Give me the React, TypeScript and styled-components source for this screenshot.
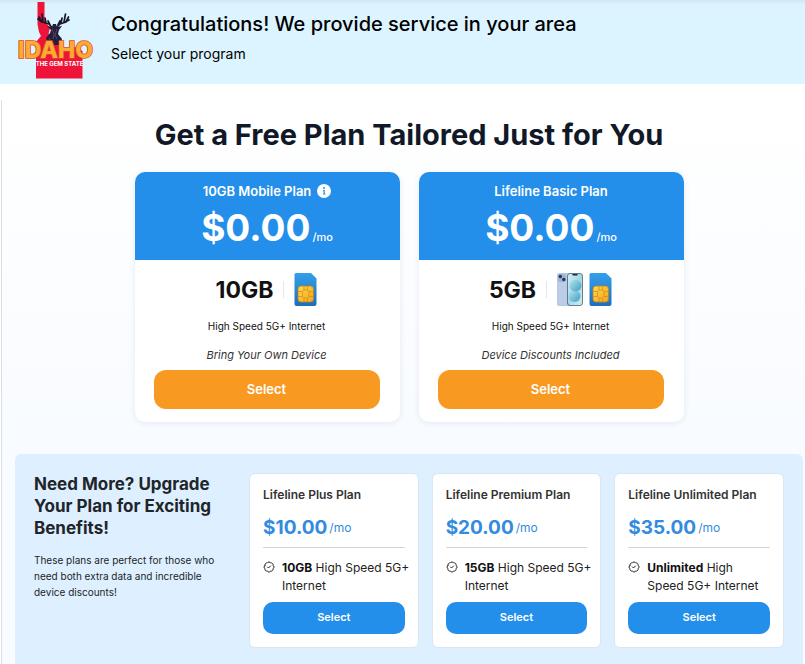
import React from "react";
import styled, { createGlobalStyle } from "styled-components";
import { BadgeCheck } from "lucide-react";

const GlobalStyle = createGlobalStyle`
  *, *::before, *::after { box-sizing: border-box; }
  body {
    margin: 0;
    background: #ffffff;
    color: #111111;
    font-family: Inter, "Open Sans", sans-serif;
  }
  h1, h2, h3, p, ul { margin: 0; padding: 0; }
  button { font-family: inherit; cursor: pointer; border: 0; }
`;

const Page = styled.div`
  min-height: 100vh;
  display: flex;
  flex-direction: column;
`;

const Banner = styled.header`
  display: flex;
  gap: 16px;
  height: 84px;
  padding: 0 16px;
  background: linear-gradient(#cfe5f0 0, #dcf4ff 4px);
`;

const BannerText = styled.div`
  padding-top: 10px;
`;

const BannerTitle = styled.h1`
  font-size: 20px;
  line-height: 28px;
  font-weight: 500;
  color: #000000;
`;

const BannerSubtitle = styled.p`
  margin-top: 6px;
  font-size: 14px;
  line-height: 20px;
  color: #000000;
`;

const Main = styled.main`
  flex: 1;
  display: flex;
  flex-direction: column;
  margin: 16px 0 0 1px;
  padding: 17px 2px 0 13px;
  border-left: 1px solid #dcdfe4;
  background: linear-gradient(#ffffff, #f8fbff 340px);
`;

const MainTitle = styled.h2`
  font-size: 29px;
  line-height: 36px;
  font-weight: 700;
  text-align: center;
  color: #111827;
`;

const FreePlans = styled.section`
  display: grid;
  grid-template-columns: repeat(2, 265px);
  justify-content: center;
  gap: 19px;
  margin-top: 19px;
`;

const PlanCard = styled.article`
  overflow: hidden;
  border-radius: 10px;
  background: #ffffff;
  box-shadow: 0 1px 6px rgba(30, 80, 140, 0.1);
  text-align: center;
`;

const PlanHead = styled.div`
  height: 88px;
  padding-top: 9px;
  background: #248fea;
  color: #ffffff;
`;

const PlanName = styled.h3`
  display: flex;
  align-items: center;
  justify-content: center;
  gap: 6px;
  font-size: 13px;
  line-height: 20px;
  font-weight: 600;
`;

const Price = styled.p`
  display: flex;
  align-items: baseline;
  justify-content: center;
  gap: 2px;
  font-size: 37px;
  line-height: 54px;
  font-weight: 700;
`;

const PriceUnit = styled.span`
  font-size: 11px;
  font-weight: 500;
`;

const PlanBody = styled.div`
  padding: 13px 20px 13px 19px;
`;

const DataRow = styled.div`
  display: flex;
  align-items: center;
  justify-content: center;
  height: 33px;
`;

const DataAmount = styled.strong`
  font-size: 23px;
  line-height: 32px;
  font-weight: 700;
`;

const Divider = styled.span`
  width: 1px;
  height: 17px;
  margin: 0 10px;
  background: #e5e7eb;
`;

const DeviceIcons = styled.span`
  display: flex;
  gap: 6px;
`;

const Speed = styled.p`
  margin-top: 12px;
  font-size: 10px;
  line-height: 16px;
`;

const DeviceNote = styled.p`
  margin-top: 13px;
  font-size: 11px;
  line-height: 16px;
  font-style: italic;
  color: #333333;
`;

const SelectButton = styled.button<{ $tone: "orange" | "blue" }>`
  display: block;
  width: 100%;
  height: ${(p) => (p.$tone === "orange" ? "39px" : "32px")};
  margin-top: 7px;
  padding: 0 0 2px;
  border-radius: ${(p) => (p.$tone === "orange" ? "12px" : "10px")};
  background: ${(p) => (p.$tone === "orange" ? "#f89922" : "#248fea")};
  color: #ffffff;
  font-size: ${(p) => (p.$tone === "orange" ? "13px" : "11px")};
  font-weight: 600;
`;

const Upgrade = styled.section`
  flex: 1;
  display: grid;
  grid-template-columns: 202px repeat(3, minmax(0, 1fr));
  align-items: start;
  gap: 13px;
  margin-top: 32px;
  padding: 19px 19px 17px;
  border-radius: 6px 6px 0 0;
  background: #def0ff;
`;

const UpgradeIntro = styled.div`
  padding-right: 16px;
`;

const UpgradeTitle = styled.h2`
  font-size: 17px;
  line-height: 22px;
  font-weight: 700;
  color: #212529;
`;

const UpgradeText = styled.p`
  margin-top: 13px;
  font-size: 10px;
  line-height: 16px;
  color: #212529;
`;

const UpgradeCard = styled.article`
  padding: 12px 13px 13px;
  border: 1px solid #d8e6f2;
  border-radius: 6px;
  background: #ffffff;
`;

const UpgradeName = styled.h3`
  font-size: 12px;
  line-height: 18px;
  font-weight: 600;
  color: #333333;
  white-space: nowrap;
`;

const UpgradePrice = styled.p`
  display: flex;
  align-items: center;
  gap: 2px;
  height: 44px;
  padding-top: 3px;
  border-bottom: 1px solid #d3d6da;
  font-size: 19px;
  font-weight: 700;
  color: #328bdf;
`;

const UpgradeUnit = styled.span`
  font-size: 12px;
  font-weight: 400;
`;

const Features = styled.ul`
  padding-top: 11px;
  list-style: none;
`;

const Feature = styled.li`
  display: flex;
  gap: 7px;
  font-size: 12px;
  line-height: 18px;
  color: #222222;

  svg { flex: none; margin-top: 2px; }
  b { color: #111111; font-weight: 700; }
`;

const FeatureLine = styled.span`
  display: block;
  white-space: nowrap;
`;

function IdahoLogo() {
  return (
    <svg width="79" height="84" viewBox="16 0 79 84" role="img" aria-label="Idaho, the gem state">
      <path
        d="M37.500 2H44.500V19L47 24L50 28L48.500 34L54 38L58 43L62 47H75L82.500 51V78.500H36V42L41 36L39 32L37.500 24Z"
        fill="#ee1338"
      />
      <g fill="none" stroke="#17172b" strokeWidth="1.700" strokeLinecap="round" strokeLinejoin="round">
        <path d="M51.500 27L49 24L42 22L39 17M42 22L38 19M43 22L42 14M46 23L45 18M50 25L48 21" />
        <path d="M57 27L60 24L66 22L68.500 17M65 22L69 20M64 22L65.500 14M61 23L62 18M58 25L60 21" />
      </g>
      <path
        d="M47 26L52 27L53 24L56 24L57 27L62 26L59 30L58 34L62 39L60 45H48L46 38L50 33L51 30Z"
        fill="#211f3b"
      />
      <path d="M52 29L54 35L53 39M57 29L55 35L57 39M49 38L51 42" fill="none" stroke="#594666" strokeWidth="1" />
      <g fontFamily="Inter, sans-serif" textAnchor="middle">
        <text
          x="55.500"
          y="58"
          fontSize="23"
          fontWeight="800"
          fill="#fbad31"
          stroke="#e3472b"
          strokeWidth="1.600"
          paintOrder="stroke"
        >
          IDAHO
        </text>
        <text x="59.500" y="66" fontSize="6" fontWeight="700" fill="#ffffff">
          THE GEM STATE
        </text>
      </g>
    </svg>
  );
}

function InfoIcon() {
  return (
    <svg width="14" height="14" viewBox="0 0 14 14" aria-hidden="true">
      <circle cx="7" cy="7" r="7" fill="#ffffff" />
      <circle cx="7" cy="4" r="1" fill="#248fea" />
      <path d="M6 6.500H7.200V10M6 10H8.400" fill="none" stroke="#248fea" strokeWidth="1.200" />
    </svg>
  );
}

function SimIcon() {
  return (
    <svg width="23" height="33" viewBox="0 0 23 33" aria-hidden="true">
      <defs>
        <linearGradient id="sim-body" x1="0" y1="0" x2="0" y2="1">
          <stop offset="0" stopColor="#35a0ea" />
          <stop offset="1" stopColor="#1c6fbd" />
        </linearGradient>
        <linearGradient id="sim-chip" x1="0" y1="0" x2="1" y2="1">
          <stop offset="0" stopColor="#ffd84a" />
          <stop offset="1" stopColor="#f5a51c" />
        </linearGradient>
      </defs>
      <path d="M2 0H17L22.500 5.500V31Q22.500 33 20.500 33H2.500Q.5 33 .5 31V1.500Q.5 0 2 0Z" fill="url(#sim-body)" />
      <rect x="4" y="13" width="15.500" height="16" rx="3" fill="url(#sim-chip)" stroke="#c6811d" strokeWidth=".8" />
      <path
        d="M4 18.500H8.500L10 17V13M19.500 18.500H15L13.500 17V13M4 23.500H8.500L10 25V29M19.500 23.500H15L13.500 25V29M8.500 18.500V23.500M15 18.500V23.500M10 17H13.500M10 25H13.500"
        fill="none"
        stroke="#cf8a20"
        strokeWidth=".7"
      />
    </svg>
  );
}

function PhoneIcon() {
  return (
    <svg width="26" height="33" viewBox="0 0 26 33" aria-hidden="true">
      <defs>
        <linearGradient id="phone-screen" x1="0" y1="0" x2="1" y2="1">
          <stop offset="0" stopColor="#d5f0f5" />
          <stop offset=".5" stopColor="#a3d8e5" />
          <stop offset="1" stopColor="#d1edf0" />
        </linearGradient>
        <linearGradient id="phone-bubble" x1="0" y1="0" x2="1" y2="1">
          <stop offset="0" stopColor="#b9e6ef" />
          <stop offset="1" stopColor="#3f9dc2" />
        </linearGradient>
      </defs>
      <rect x=".3" y=".3" width="15" height="32.400" rx="2.500" fill="#bccde8" stroke="#9db0cc" strokeWidth=".6" />
      <rect x="1" y="1" width="8" height="8" rx="2" fill="#9db4d4" />
      <circle cx="3.300" cy="3.500" r="1.700" fill="#253954" />
      <circle cx="6.800" cy="6.500" r="1.700" fill="#253954" />
      <rect x="10.500" y=".5" width="15" height="32" rx="2.500" fill="url(#phone-screen)" stroke="#4a6173" strokeWidth=".8" />
      <circle cx="17.500" cy="23" r="6" fill="url(#phone-bubble)" />
      <circle cx="18.500" cy="12.500" r="6" fill="url(#phone-bubble)" />
      <path d="M16 1.700H20" stroke="#172b3a" strokeWidth="1.500" strokeLinecap="round" />
    </svg>
  );
}

const freePlans = [
  { name: "10GB Mobile Plan", info: true, data: "10GB", phone: false, note: "Bring Your Own Device" },
  { name: "Lifeline Basic Plan", info: false, data: "5GB", phone: true, note: "Device Discounts Included" },
];

const upgrades = [
  { name: "Lifeline Plus Plan", price: "$10.00", data: "10GB", lines: ["High Speed 5G+", "Internet"] },
  { name: "Lifeline Premium Plan", price: "$20.00", data: "15GB", lines: ["High Speed 5G+", "Internet"] },
  { name: "Lifeline Unlimited Plan", price: "$35.00", data: "Unlimited", lines: ["High", "Speed 5G+ Internet"] },
];

export default function App() {
  return (
    <Page>
      <GlobalStyle />
      <Banner>
        <IdahoLogo />
        <BannerText>
          <BannerTitle>Congratulations! We provide service in your area</BannerTitle>
          <BannerSubtitle>Select your program</BannerSubtitle>
        </BannerText>
      </Banner>
      <Main>
        <MainTitle>Get a Free Plan Tailored Just for You</MainTitle>
        <FreePlans>
          {freePlans.map((plan) => (
            <PlanCard key={plan.name}>
              <PlanHead>
                <PlanName>
                  {plan.name}
                  {plan.info && <InfoIcon />}
                </PlanName>
                <Price>
                  $0.00<PriceUnit>/mo</PriceUnit>
                </Price>
              </PlanHead>
              <PlanBody>
                <DataRow>
                  <DataAmount>{plan.data}</DataAmount>
                  <Divider />
                  <DeviceIcons>
                    {plan.phone && <PhoneIcon />}
                    <SimIcon />
                  </DeviceIcons>
                </DataRow>
                <Speed>High Speed 5G+ Internet</Speed>
                <DeviceNote>{plan.note}</DeviceNote>
                <SelectButton type="button" $tone="orange">Select</SelectButton>
              </PlanBody>
            </PlanCard>
          ))}
        </FreePlans>
        <Upgrade>
          <UpgradeIntro>
            <UpgradeTitle>Need More? Upgrade Your Plan for Exciting Benefits!</UpgradeTitle>
            <UpgradeText>
              These plans are perfect for those who need both extra data and incredible device discounts!
            </UpgradeText>
          </UpgradeIntro>
          {upgrades.map((plan) => (
            <UpgradeCard key={plan.name}>
              <UpgradeName>{plan.name}</UpgradeName>
              <UpgradePrice>
                {plan.price}
                <UpgradeUnit>/mo</UpgradeUnit>
              </UpgradePrice>
              <Features>
                <Feature>
                  <BadgeCheck size={12} strokeWidth={2} aria-hidden="true" />
                  <div>
                    <FeatureLine>
                      <b>{plan.data}</b> {plan.lines[0]}
                    </FeatureLine>
                    <FeatureLine>{plan.lines[1]}</FeatureLine>
                  </div>
                </Feature>
              </Features>
              <SelectButton type="button" $tone="blue">Select</SelectButton>
            </UpgradeCard>
          ))}
        </Upgrade>
      </Main>
    </Page>
  );
}
